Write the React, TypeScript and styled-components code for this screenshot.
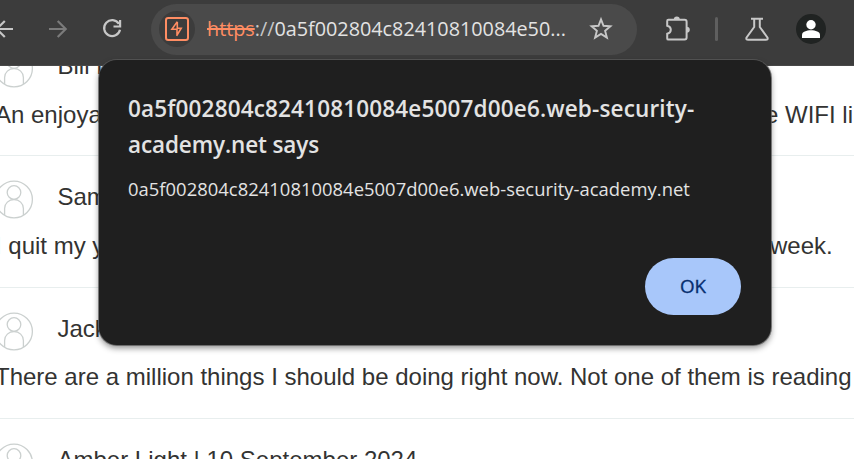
import React from 'react';
import styled, { createGlobalStyle } from 'styled-components';

const GlobalStyle = createGlobalStyle`
  * { box-sizing: border-box; }
  html, body { margin: 0; padding: 0; overflow: hidden; background: #fff; }
`;

const uiFont = "'Open Sans', 'Noto Sans', sans-serif";

const Window = styled.div`
  position: relative;
  display: flex;
  flex-direction: column;
  width: 854px;
  height: 459px;
  overflow: hidden;
  background: #fff;
`;

const Toolbar = styled.header`
  display: flex;
  align-items: center;
  flex: none;
  height: 66px;
  padding-bottom: 7px;
  background: #3c3c3c;
  border-bottom: 1px solid #484848;
`;

const Icon = styled.svg<{ $gap?: number }>`
  display: block;
  flex: none;
  margin-left: ${(p) => p.$gap ?? 0}px;
  overflow: visible;
`;

const AddressBar = styled.div`
  display: flex;
  align-items: center;
  flex: none;
  width: 486px;
  height: 51px;
  margin-left: 30px;
  padding-left: 8px;
  border-radius: 26px;
  background: #4a4a4a;
`;

const SiteBadge = styled.div`
  display: grid;
  place-items: center;
  width: 36px;
  height: 36px;
  border-radius: 50%;
  background: #3c3c3c;
`;

const Url = styled.div`
  width: 372px;
  margin-left: 12px;
  font: 400 19.8px/30px ${uiFont};
  white-space: nowrap;
  color: #e3e3e3;
`;

const Scheme = styled.span`
  color: #ff8d63;
  text-decoration: line-through;
  text-decoration-thickness: 1.5px;
`;

const Slashes = styled.span`
  color: #c7c7c7;
`;

const Divider = styled.div`
  width: 3px;
  height: 24px;
  margin-left: 24px;
  border-radius: 2px;
  background: #5f5f5f;
`;

const Profile = styled.div`
  display: grid;
  place-items: center;
  width: 30px;
  height: 30px;
  margin-left: 27px;
  border-radius: 50%;
  background: #202322;
`;

const Comments = styled.main`
  flex: 1;
  min-height: 0;
  margin: 0 0 0 -5px;
  overflow: hidden;
  font: 24px/28px 'Liberation Sans', Arial, sans-serif;
  color: #333332;
`;

const Comment = styled.article<{ $height: number; $raised?: number }>`
  height: ${(p) => p.$height}px;
  margin-top: ${(p) => -(p.$raised ?? 0)}px;
  padding-top: 24px;
  border-bottom: 1px solid #e8eeee;
`;

const Author = styled.div`
  display: flex;
  align-items: flex-start;
  height: 39px;
  gap: 24.5px;
  white-space: pre;
`;

const AuthorName = styled.span`
  padding-top: 3px;
`;

const Body = styled.div<{ $tail?: number; $gap: number }>`
  display: grid;
  grid-template-columns: ${(p) => (p.$tail ? `${p.$tail}px auto` : 'auto')};
  justify-content: start;
  margin-top: ${(p) => p.$gap}px;
  white-space: pre;
`;

const Dialog = styled.section`
  position: absolute;
  left: 99px;
  top: 60px;
  display: flex;
  flex-direction: column;
  width: 672px;
  height: 285px;
  padding: 31px 30px 30px 29px;
  border-radius: 18px;
  background: #1f1f1f;
  box-shadow: 0 0 0 1px rgba(90, 90, 90, 0.75), 0 3px 6px rgba(0, 0, 0, 0.45);
  font-family: ${uiFont};
  color: #e3e3e3;
`;

const Title = styled.h1`
  margin: 0;
  font-size: 22.5px;
  font-weight: 600;
  line-height: 36px;
  white-space: nowrap;
`;

const TitleLine = styled.span<{ $tracking: number }>`
  display: block;
  letter-spacing: ${(p) => p.$tracking}px;
`;

const Message = styled.p`
  margin: 11px 0 0;
  font-size: 18.4px;
  line-height: 30px;
  letter-spacing: 0.03px;
  white-space: nowrap;
`;

const OkButton = styled.button`
  align-self: flex-end;
  width: 96px;
  height: 57px;
  margin-top: auto;
  padding: 0;
  border: 0;
  border-radius: 29px;
  background: #a8c7fa;
  color: #062e6f;
  font: 500 18.8px/57px ${uiFont};
  -webkit-text-stroke: 0.35px #062e6f;
`;

const Avatar = () => (
  <Icon width="38" height="39" viewBox="0 0 38 39" fill="none" stroke="#cbd0cf" strokeWidth="1.3">
    <circle cx="19" cy="19.5" r="18.4" />
    <circle cx="19" cy="12.5" r="6.8" />
    <path d="M9.6 35V28.4a9.4 8.9 0 0 1 18.8 0V35" />
  </Icon>
);

const comments = [
  { author: 'Bill Board', body: 'An enjoyable', tailAt: 770, tail: 'e WIFI li', height: 131, raised: 41, gap: 13 },
  { author: 'Sam Sandwich', body: 'I quit my yoga', tailAt: 775, tail: 'week.', height: 132, gap: 13 },
  { author: 'Jack Pott', body: 'There are a million things I should be doing right now. Not one of them is reading', height: 131, gap: 12 },
  { author: 'Amber Light | 10 September 2024', body: '', height: 131, gap: 12 },
];

export default function App() {
  return (
    <>
      <GlobalStyle />
      <Window>
        <Toolbar>
          <Icon width="18" height="18" viewBox="-5 0 18 18" $gap={-5} fill="none" stroke="#c7c7c7" strokeWidth="2.2">
            <path d="M13 9H-3M4.8 1L-3.2 9L4.8 17" />
          </Icon>
          <Icon width="18" height="18" viewBox="0 0 18 18" $gap={36} fill="none" stroke="#7b7b7b" strokeWidth="2.2">
            <path d="M0 9H16.5M8.7 1L16.7 9L8.7 17" />
          </Icon>
          <Icon width="18" height="18" viewBox="0 0 18 18" $gap={36} fill="none" stroke="#c7c7c7" strokeWidth="2.2">
            <path d="M15.9 3.8A8 8 0 1 0 17 9.8M17.1 0V6.5H10.5" />
          </Icon>
          <AddressBar>
            <SiteBadge>
              <Icon width="24" height="24" viewBox="0 0 24 24" fill="none" stroke="#ff8d63" strokeWidth="2">
                <rect x="1" y="1" width="22" height="22" rx="2.2" />
                <path d="M12.3 4.6L6.9 12.3H12V18.6M12.3 5V11.2H16.2L11.6 18.8" strokeWidth="1.6" />
              </Icon>
            </SiteBadge>
            <Url>
              <Scheme>https</Scheme>
              <Slashes>://</Slashes>0a5f002804c82410810084e50...
            </Url>
            <Icon width="24" height="24" viewBox="0 0 24 24" $gap={10} fill="none" stroke="#c7c7c7" strokeWidth="1.9">
              <path d="M12 2.4L14.5 8.8L21.4 9.3L16.1 13.8L17.9 20.6L12 16.9L6.1 20.6L7.9 13.8L2.6 9.3L9.5 8.8Z" />
            </Icon>
          </AddressBar>
          <Icon width="25" height="26" viewBox="0 1 25 26" $gap={29} fill="none" stroke="#c7c7c7" strokeWidth="2">
            <path d="M1.2 6Q1.2 4.8 2.4 4.8H18.6Q20.6 4.8 20.6 6.8V22.6Q20.6 24.6 18.6 24.6H2.4Q1.2 24.6 1.2 23.4V18.8C6 17.6 6 12 1.2 10.8Z" />
            <path d="M7.8 4.8a3 3.2 0 0 1 6 0zM20.6 11.7a3.2 3 0 0 1 0 6z" fill="#c7c7c7" stroke="none" />
          </Icon>
          <Divider />
          <Icon width="24" height="24" viewBox="0 0 24 24" $gap={27} fill="none" stroke="#c7c7c7" strokeWidth="2">
            <path d="M6 1.8H18M9.2 2V10L1.6 20.4Q.6 22.8 3.2 22.8H20.8Q23.4 22.8 22.4 20.4L14.8 10V2" />
          </Icon>
          <Profile>
            <Icon width="20" height="20" viewBox="0 0 20 20" fill="#fff">
              <circle cx="10" cy="5.7" r="4.7" />
              <path d="M1 19V16C1 9.8 19 9.8 19 16V19Z" />
            </Icon>
          </Profile>
        </Toolbar>
        <Comments>
          {comments.map((c) => (
            <Comment key={c.author} $height={c.height} $raised={c.raised}>
              <Author>
                <Avatar />
                <AuthorName>{c.author}</AuthorName>
              </Author>
              <Body $tail={c.tailAt} $gap={c.gap}>
                <span>{c.body}</span>
                {c.tail && <span>{c.tail}</span>}
              </Body>
            </Comment>
          ))}
        </Comments>
        <Dialog role="alertdialog">
          <Title>
            <TitleLine $tracking={0.16}>0a5f002804c82410810084e5007d00e6.web-security-</TitleLine>
            <TitleLine $tracking={-0.12}>academy.net says</TitleLine>
          </Title>
          <Message>0a5f002804c82410810084e5007d00e6.web-security-academy.net</Message>
          <OkButton>OK</OkButton>
        </Dialog>
      </Window>
    </>
  );
}
